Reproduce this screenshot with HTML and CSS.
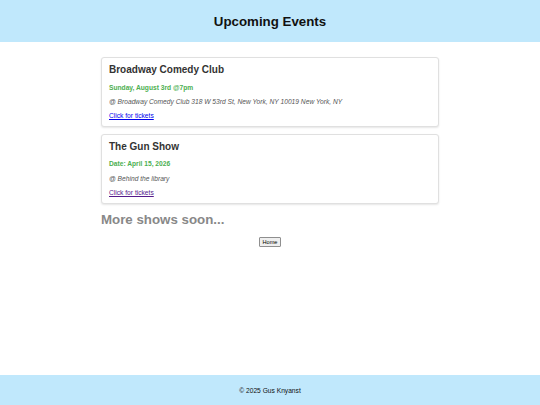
FILE: index.html
```html
<!DOCTYPE html>
<html lang="en">
<head>
<meta charset="utf-8">
<title>Upcoming Events</title>
<link rel="stylesheet" href="styles.css">
</head>
<body>
<header class="site-header">
  <h1 class="site-title">Upcoming Events</h1>
</header>
<main class="content">
  <div class="event-list">
    <article class="event-card">
      <h2 class="event-title">Broadway Comedy Club</h2>
      <p class="event-date">Sunday, August 3rd @7pm</p>
      <p class="event-place">@ Broadway Comedy Club 318 W 53rd St, New York, NY 10019 New York, NY</p>
      <p class="event-link-row"><a class="event-link" href="#tickets1">Click for tickets</a></p>
    </article>
    <article class="event-card">
      <h2 class="event-title">The Gun Show</h2>
      <p class="event-date">Date: April 15, 2026</p>
      <p class="event-place">@ Behind the library</p>
      <p class="event-link-row"><a class="event-link visited" href="#tickets2">Click for tickets</a></p>
    </article>
  </div>
  <h2 class="more-title">More shows soon...</h2>
  <div class="home-row"><button class="home-btn" type="button">Home</button></div>
</main>
<footer class="site-footer">
  <p class="footer-text">© 2025 Gus Knyanst</p>
</footer>
</body>
</html>
```
FILE: styles.css
```css
html, body {
  margin: 0;
  padding: 0;
}
body {
  font-family: "Liberation Sans", Arial, sans-serif;
  font-size: 6.67px;
  background: #ffffff;
  color: #000;
  min-height: 100vh;
  display: flex;
  flex-direction: column;
}
.site-header {
  background: #c0e8fc;
  height: 42px;
  display: flex;
  align-items: center;
  justify-content: center;
}
.site-title {
  margin: 0;
  font-size: 13.3px;
  font-weight: bold;
  color: #111;
}
.content {
  flex: 1;
  width: 338px;
  margin: 15px auto 0;
}
.event-list {
  display: flex;
  flex-direction: column;
  gap: 6.5px;
}
.event-card {
  background: #fff;
  border: 1px solid #e0e0e0;
  border-radius: 3px;
  box-shadow: 0 1px 2px rgba(0,0,0,0.1);
  padding: 6px 7px 7px;
}
.event-title {
  margin: 0 0 8.7px;
  font-size: 10px;
  font-weight: bold;
  color: #333;
}
.event-card p {
  margin: 0 0 7.3px;
}
.event-card p.event-link-row {
  margin: 0;
}
.event-date {
  font-weight: bold;
  color: #4caf50;
}
.event-place {
  font-style: italic;
  color: #555;
}
.event-link {
  color: #0000ee;
}
.event-link.visited {
  color: #551a8b;
}
.more-title {
  margin: 7.5px 0 0;
  font-size: 13.3px;
  font-weight: bold;
  color: #888;
}
.home-row {
  display: flex;
  justify-content: center;
  margin-top: 10px;
}
.home-btn {
  font-family: "Liberation Sans", Arial, sans-serif;
  font-size: 5.6px;
  padding: 1px 3px;
  border: 1px solid #8f8f8f;
  border-radius: 1px;
  background: #efefef;
  color: #000;
  line-height: normal;
}
.site-footer {
  background: #c0e8fc;
  height: 30px;
  display: flex;
  align-items: center;
  justify-content: center;
}
.footer-text {
  margin: 0;
  font-size: 6.67px;
  color: #111;
}
```
